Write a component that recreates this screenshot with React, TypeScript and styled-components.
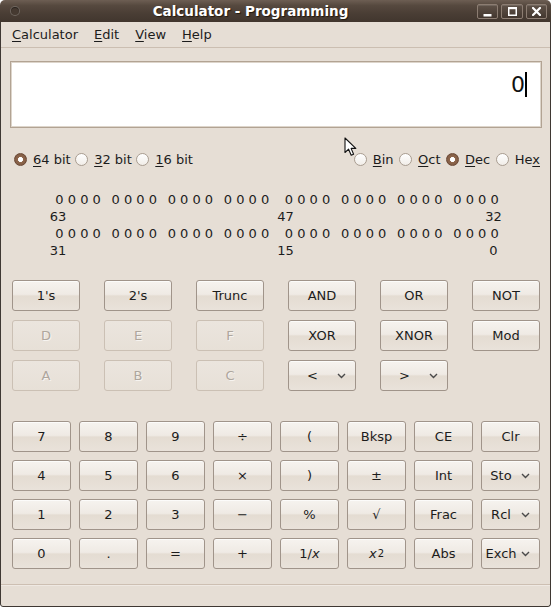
import React from 'react';
import styled, { createGlobalStyle } from 'styled-components';

const Global = createGlobalStyle`
  html, body { margin: 0; padding: 0; background: #ffffff; }
  body { font-family: "DejaVu Sans", "Liberation Sans", sans-serif; }
`;

const Window = styled.div`
  position: relative;
  width: 551px;
  height: 607px;
  display: flex;
  flex-direction: column;
  border-radius: 5px 5px 3px 3px;
  overflow: hidden;
  font-family: "DejaVu Sans", "Liberation Sans", sans-serif;
  font-size: 13px;
  color: #1c1c1c;
`;

const TitleBar = styled.div`
  height: 22px;
  flex: none;
  display: flex;
  align-items: center;
  padding: 0 4px 0 10px;
  background: linear-gradient(#6d5e53 0%, #56493f 25%, #4a3e35 60%, #41362e 100%);
`;

const TitleOrb = styled.span`
  width: 10px;
  height: 10px;
  box-sizing: border-box;
  border-radius: 50%;
  border: 1px solid rgba(255, 255, 255, 0.22);
  background: #463a31;
  box-shadow: inset 0 1px 1px rgba(0, 0, 0, 0.45);
  flex: none;
`;

const TitleText = styled.div`
  flex: 1;
  text-align: center;
  padding-left: 4px;
  color: #ffffff;
  font-weight: bold;
  font-size: 13.5px;
  text-shadow: 1px 1px 1px #22190f;
  white-space: nowrap;
`;

const WinButtons = styled.div`
  display: flex;
  gap: 3px;
`;

const WinButton = styled.span<{ $w: number }>`
  width: ${(p) => p.$w}px;
  height: 15px;
  box-sizing: border-box;
  border: 1px solid #8c7d72;
  border-radius: 2px;
  background: linear-gradient(#5f5248, #43372f);
  box-shadow: inset 0 1px 0 rgba(255, 255, 255, 0.12);
  display: flex;
  align-items: center;
  justify-content: center;
`;

const Body = styled.div`
  flex: 1;
  display: flex;
  flex-direction: column;
  background: #e6ded5;
  border: 1px solid #3f3833;
  border-top: none;
  border-radius: 0 0 3px 3px;
`;

const MenuBar = styled.div`
  height: 25px;
  flex: none;
  display: flex;
  align-items: center;
  padding-left: 3px;
  border-bottom: 1px solid #cbbeb1;
`;

const MenuItem = styled.span`
  padding: 0 8px;
  line-height: 25px;
`;

const Mn = styled.span`
  text-decoration: underline;
  text-underline-offset: 2px;
  text-decoration-thickness: 1px;
`;

const Display = styled.div`
  margin: 13px 0 0 9px;
  width: 532px;
  height: 67px;
  box-sizing: border-box;
  border: 1px solid #b2a393;
  box-shadow: inset 0 0 0 1px #ddd5cb;
  background: #ffffff;
  display: flex;
  justify-content: flex-end;
  align-items: flex-start;
  padding: 10px 14px 0 0;
  font-size: 22px;
  line-height: 25px;
  color: #111;
`;

const Caret = styled.span`
  width: 2px;
  height: 25px;
  background: #000;
`;

const RadioRow = styled.div`
  margin: 22px 0 0 13px;
  width: 526px;
  height: 18px;
  display: flex;
  justify-content: space-between;
  align-items: center;
`;

const RadioGroup = styled.div<{ $gap: number }>`
  display: flex;
  align-items: center;
  gap: ${(p) => p.$gap}px;
`;

const RadioItem = styled.label`
  display: flex;
  align-items: center;
  gap: 6px;
  white-space: nowrap;
`;

const RadioDot = styled.span<{ $checked?: boolean }>`
  width: 13px;
  height: 13px;
  box-sizing: border-box;
  border-radius: 50%;
  flex: none;
  border: 1px solid ${(p) => (p.$checked ? '#6a4835' : '#a99d91')};
  background: ${(p) =>
    p.$checked
      ? 'radial-gradient(circle, #ffffff 0 2.2px, #8e664c 2.8px, #7a563f 100%)'
      : 'linear-gradient(#ffffff, #f1ede8)'};
`;

const BitPanel = styled.div`
  margin-top: 23px;
  display: flex;
  flex-direction: column;
`;

const BitRow = styled.div`
  display: flex;
  height: 17px;
  line-height: 17px;
  padding-left: 52.3px;
  gap: 11.4px;
`;

const BitHalf = styled.div`
  display: flex;
  gap: 6.6px;
`;

const BitGroup = styled.div`
  display: flex;
`;

const BitCell = styled.span`
  width: 12.4px;
  text-align: center;
`;

const BitLabelRow = styled.div`
  display: grid;
  grid-template-columns: 24px 203.5px 24px 184px 24px;
  height: 17px;
  line-height: 17px;
  padding-left: 45px;
`;

const BitLabel = styled.span<{ $col: number }>`
  grid-column: ${(p) => p.$col};
  text-align: center;
  white-space: nowrap;
`;

const UpperGrid = styled.div`
  margin: 21px 0 0 11px;
  width: 528px;
  display: grid;
  grid-template-columns: repeat(6, 68px);
  grid-auto-rows: 31px;
  column-gap: 24px;
  row-gap: 9px;
`;

const LowerGrid = styled.div`
  margin: 30px 0 0 11px;
  width: 528px;
  display: grid;
  grid-template-columns: repeat(8, 59px);
  grid-auto-rows: 31px;
  column-gap: 8px;
  row-gap: 8px;
`;

const Button = styled.button`
  box-sizing: border-box;
  margin: 0;
  padding: 0;
  height: 31px;
  font-family: "DejaVu Sans", "Liberation Sans", sans-serif;
  font-size: 13px;
  color: #1c1c1c;
  border: 1px solid #a0948a;
  border-radius: 3px;
  background: linear-gradient(
    #f6f3ef 0%,
    #efeae4 46%,
    #e4dcd2 52%,
    #e9e2da 100%
  );
  box-shadow: inset 0 1px 0 rgba(255, 255, 255, 0.7);
  display: flex;
  align-items: center;
  justify-content: center;
  white-space: nowrap;

  &:disabled {
    color: #aea69d;
    border-color: #cbc0b4;
    background: linear-gradient(#ebe5de, #e7e0d7);
    text-shadow: 1px 1px 0 #f7f4f0;
    box-shadow: none;
  }
`;

const DropLabel = styled.span`
  flex: 1;
  text-align: center;
  padding-left: 1px;
`;

const Chevron = styled.svg`
  flex: none;
  margin: 1px 9px 0 2px;
`;

const Sup = styled.sup`
  font-size: 10px;
  line-height: 0;
  vertical-align: 6px;
  margin-left: 1px;
`;

const Ital = styled.i`
  font-style: italic;
`;

const StatusBar = styled.div`
  margin-top: auto;
  height: 21px;
  flex: none;
  border-top: 1px solid #cdbfb2;
  box-shadow: inset 0 1px 0 #efe9e3;
`;

const Pointer = styled.svg`
  position: absolute;
  left: 344px;
  top: 137px;
  pointer-events: none;
`;

function Drop({ label }: { label: React.ReactNode }) {
  return (
    <Button>
      <DropLabel>{label}</DropLabel>
      <Chevron width="9" height="6" viewBox="0 0 9 6">
        <polyline points="1,1 4.5,4.5 8,1" fill="none" stroke="#4a4a4a" strokeWidth="1.4" />
      </Chevron>
    </Button>
  );
}

function Radio({ checked, children }: { checked?: boolean; children: React.ReactNode }) {
  return (
    <RadioItem>
      <RadioDot $checked={checked} />
      <span>{children}</span>
    </RadioItem>
  );
}

function Bits() {
  const group = (
    <BitGroup>
      {[0, 1, 2, 3].map((i) => (
        <BitCell key={i}>0</BitCell>
      ))}
    </BitGroup>
  );
  const half = (
    <BitHalf>
      {[0, 1, 2, 3].map((i) => (
        <React.Fragment key={i}>{group}</React.Fragment>
      ))}
    </BitHalf>
  );
  return (
    <BitRow>
      {half}
      {half}
    </BitRow>
  );
}

export default function App() {
  return (
    <>
      <Global />
      <Window>
        <TitleBar>
          <TitleOrb />
          <TitleText>Calculator - Programming</TitleText>
          <WinButtons>
            <WinButton $w={21}>
              <svg width="9" height="13" viewBox="0 0 9 13">
                <rect x="0.5" y="9" width="8" height="2.5" fill="#fff" />
              </svg>
            </WinButton>
            <WinButton $w={22}>
              <svg width="9" height="9" viewBox="0 0 9 9">
                <rect x="0.75" y="0.75" width="7.5" height="7.5" fill="none" stroke="#fff" strokeWidth="1.5" />
                <rect x="0" y="0" width="9" height="2.2" fill="#fff" />
              </svg>
            </WinButton>
            <WinButton $w={21}>
              <svg width="9" height="9" viewBox="0 0 9 9">
                <path d="M1 1 L8 8 M8 1 L1 8" stroke="#fff" strokeWidth="2.2" strokeLinecap="square" />
              </svg>
            </WinButton>
          </WinButtons>
        </TitleBar>
        <Body>
          <MenuBar>
            <MenuItem>
              <Mn>C</Mn>alculator
            </MenuItem>
            <MenuItem>
              <Mn>E</Mn>dit
            </MenuItem>
            <MenuItem>
              <Mn>V</Mn>iew
            </MenuItem>
            <MenuItem>
              <Mn>H</Mn>elp
            </MenuItem>
          </MenuBar>

          <Display>
            <span>0</span>
            <Caret />
          </Display>

          <RadioRow>
            <RadioGroup $gap={4.5}>
              <Radio checked>
                <Mn>6</Mn>4 bit
              </Radio>
              <Radio>
                <Mn>3</Mn>2 bit
              </Radio>
              <Radio>
                <Mn>1</Mn>6 bit
              </Radio>
            </RadioGroup>
            <RadioGroup $gap={5.5}>
              <Radio>
                <Mn>B</Mn>in
              </Radio>
              <Radio>
                <Mn>O</Mn>ct
              </Radio>
              <Radio checked>
                <Mn>D</Mn>ec
              </Radio>
              <Radio>
                He<Mn>x</Mn>
              </Radio>
            </RadioGroup>
          </RadioRow>

          <BitPanel>
            <Bits />
            <BitLabelRow>
              <BitLabel $col={1}>63</BitLabel>
              <BitLabel $col={3}>47</BitLabel>
              <BitLabel $col={5}>32</BitLabel>
            </BitLabelRow>
            <Bits />
            <BitLabelRow>
              <BitLabel $col={1}>31</BitLabel>
              <BitLabel $col={3}>15</BitLabel>
              <BitLabel $col={5}>0</BitLabel>
            </BitLabelRow>
          </BitPanel>

          <UpperGrid>
            <Button>1's</Button>
            <Button>2's</Button>
            <Button>Trunc</Button>
            <Button>AND</Button>
            <Button>OR</Button>
            <Button>NOT</Button>
            <Button disabled>D</Button>
            <Button disabled>E</Button>
            <Button disabled>F</Button>
            <Button>XOR</Button>
            <Button>XNOR</Button>
            <Button>Mod</Button>
            <Button disabled>A</Button>
            <Button disabled>B</Button>
            <Button disabled>C</Button>
            <Drop label="<" />
            <Drop label=">" />
          </UpperGrid>

          <LowerGrid>
            <Button>7</Button>
            <Button>8</Button>
            <Button>9</Button>
            <Button>÷</Button>
            <Button>(</Button>
            <Button>Bksp</Button>
            <Button>CE</Button>
            <Button>Clr</Button>
            <Button>4</Button>
            <Button>5</Button>
            <Button>6</Button>
            <Button>×</Button>
            <Button>)</Button>
            <Button>±</Button>
            <Button>Int</Button>
            <Drop label="Sto" />
            <Button>1</Button>
            <Button>2</Button>
            <Button>3</Button>
            <Button>−</Button>
            <Button>%</Button>
            <Button>√</Button>
            <Button>Frac</Button>
            <Drop label="Rcl" />
            <Button>0</Button>
            <Button>.</Button>
            <Button>=</Button>
            <Button>+</Button>
            <Button>
              1/<Ital>x</Ital>
            </Button>
            <Button>
              <Ital>x</Ital>
              <Sup>2</Sup>
            </Button>
            <Button>Abs</Button>
            <Drop label="Exch" />
          </LowerGrid>

          <StatusBar />
        </Body>
        <Pointer width="13" height="20" viewBox="0 0 13 20">
          <path
            d="M1 1 L1 15.5 L4.6 12.2 L7.2 18.2 L9.6 17.2 L7.1 11.4 L11.8 11.4 Z"
            fill="#ffffff"
            stroke="#111"
            strokeWidth="1.1"
            strokeLinejoin="round"
          />
        </Pointer>
      </Window>
    </>
  );
}
